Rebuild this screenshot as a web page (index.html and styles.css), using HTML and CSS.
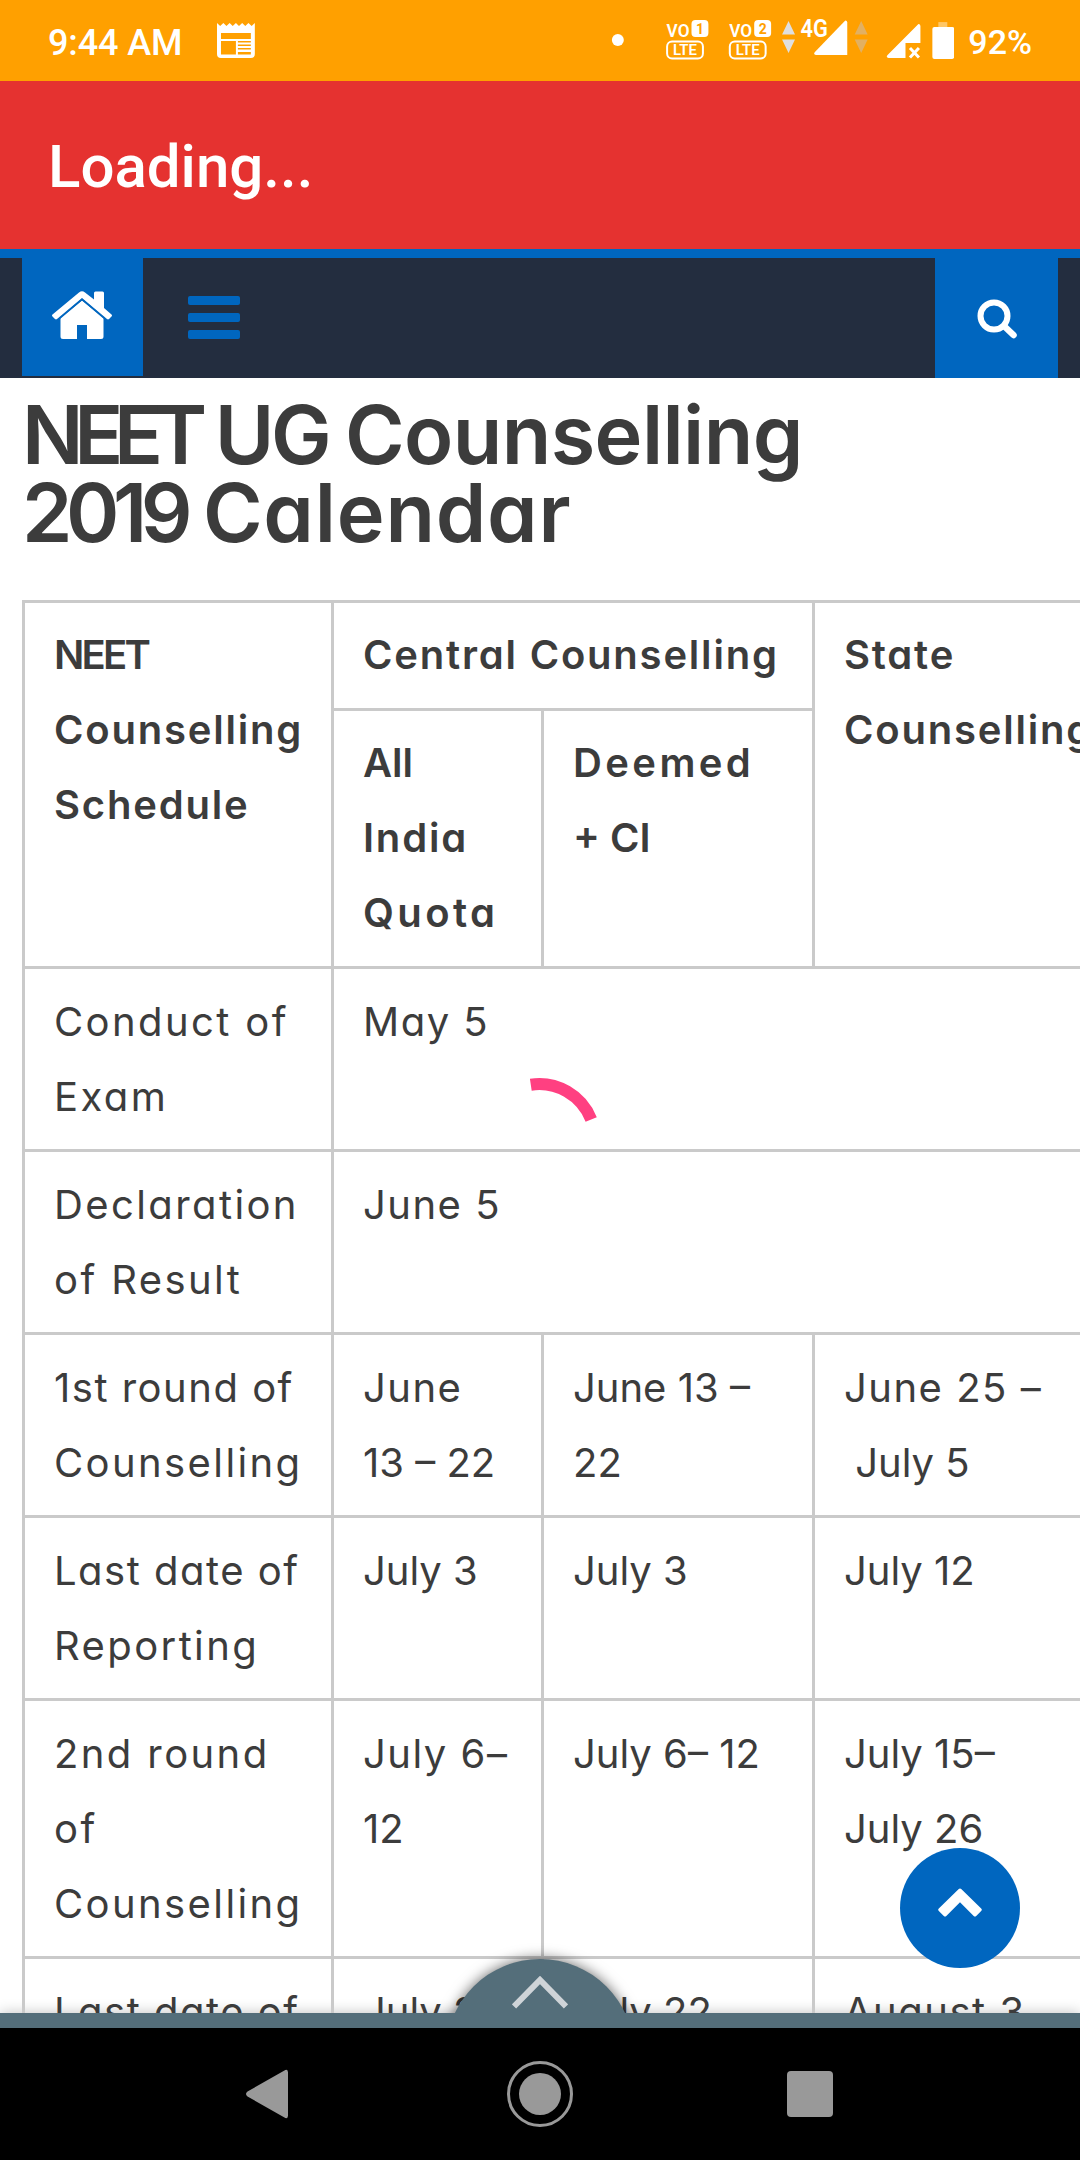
FILE: index.html
```
<!DOCTYPE html>
<html lang="en">
<head>
  <meta charset="utf-8">
  <title>NEET UG Counselling 2019 Calendar</title>
  <link rel="stylesheet" href="styles.css">
</head>
<body>

  <div class="status-bar">
    <span class="time">9:44 AM</span>
    <svg class="news-icon" width="38" height="35" viewBox="0 0 38 35">
      <path fill="#fff" fill-rule="evenodd" d="M0 0l3.2 3L6.400 0l3.100 3L12.700 0l3.100 3L19 0l3.100 3 3.200-3 3.100 3 3.200-3 3.200 3L38 0v31q0 4-4 4H4q-4 0-4-4zM4 10v6h30v-6zM4 18v13.500h15V18zM21 18v1.500h13V18zM21 21.500V23h13v-1.500zM21 25v1.500h13V25zM21 29v2.500h13V29z"/>
    </svg>
    <svg class="signal-icons" width="376" height="81" viewBox="580 0 376 81">
      <circle cx="618" cy="40" r="6" fill="#fff"/>
      <g fill="none" stroke="#fff" stroke-width="2">
        <rect x="667.500" y="41.500" width="36" height="17" rx="5"/>
        <rect x="730.500" y="41.500" width="36" height="17" rx="5"/>
      </g>
      <g fill="#fff">
        <rect x="692" y="20" width="17" height="17" rx="4"/>
        <rect x="755" y="20" width="17" height="17" rx="4"/>
      </g>
      <g class="lte">
        <text x="667" y="37" textLength="23" lengthAdjust="spacingAndGlyphs">VO</text>
        <text x="730" y="37" textLength="23" lengthAdjust="spacingAndGlyphs">VO</text>
        <text class="small" x="673.500" y="55.500" textLength="24">LTE</text>
        <text class="small" x="736.500" y="55.500" textLength="24">LTE</text>
        <text class="sim" x="700.500" y="33.500">1</text>
        <text class="sim" x="763.500" y="33.500">2</text>
      </g>
      <path fill="#dfdfdf" d="M789.500 21l6.500 13.500h-13zM783 39.500h13L789.500 53z"/>
      <path fill="#e2b062" d="M862.500 21l6.500 13.500h-13zM856 39.500h13L862.500 53z"/>
      <text class="net" x="801.500" y="37" textLength="27.500" lengthAdjust="spacingAndGlyphs">4G</text>
      <path fill="#fff" d="M846.500 20.500q2 0 2 2V55h-31.500q-3-.5-1-3z"/>
      <path fill="#fff" d="M920 24q2 0 2 2v17h-15v15h-17q-3-.5-1-3z"/>
      <path stroke="#fff" stroke-width="3" d="M911.500 48l9 9.500M920.500 48l-9 9.500"/>
      <path fill="#ffc766" d="M940 22h9v6h-9z"/>
      <rect x="934" y="27" width="22" height="32" rx="2" fill="#fff"/>
    </svg>
    <span class="battery">92%</span>
  </div>

  <div class="app-bar">Loading...</div>

  <nav class="site-nav">
    <a class="home" href="#">
      <svg width="60" height="49" viewBox="0 0 60 49">
        <path fill="#fff" d="M30 9.500l21.500 17.500v18.500q0 2.500-2.500 2.500H35V34H25v14H11q-2.500 0-2.500-2.500V27z"/>
        <path fill="#fff" d="M27 1.500Q30-1 33 1.500l9 7V2q0-1.500 1.500-1.500h7Q52 .5 52 2v15l7.500 6.500q1 1 0 2L57 28q-1 .8-2 0L30 7 5 28q-1 .8-2 0L.5 25.500q-1-1 0-2z"/>
        <path fill="none" stroke="#0066bf" stroke-width="1.500" d="M7 28L30 8.500 53 28"/>
      </svg>
    </a>
    <div class="menu-toggle"><i></i><i></i><i></i></div>
    <a class="search" href="#">
      <svg width="40" height="40" viewBox="0 0 40 40">
        <circle cx="17" cy="17" r="13.500" fill="none" stroke="#fff" stroke-width="6"/>
        <path stroke="#fff" stroke-width="6.500" stroke-linecap="round" d="M27 27l9.500 9"/>
      </svg>
    </a>
  </nav>

  <main class="content">
    <h1><span class="caps">NEET</span> UG <span class="word">Counselling</span><br><span class="year">2019</span> <span class="word wide">Calendar</span></h1>

    <table class="schedule">
      <colgroup>
        <col class="c1"><col class="c2"><col class="c3"><col class="c4">
      </colgroup>
      <tr>
        <th rowspan="2"><span class="neet">NEET</span><br>Counselling<br>Schedule</th>
        <th colspan="2">Central Counselling</th>
        <th rowspan="2">State<br>Counselling</th>
      </tr>
      <tr>
        <th><span class="plain">All</span><br>India<br><span class="loose">Quota</span></th>
        <th><span class="loose">Deemed</span><br><span class="plain">+ CI</span></th>
      </tr>
      <tr>
        <td class="name">Conduct of<br>Exam</td>
        <td colspan="3"><span class="mid">May 5</span></td>
      </tr>
      <tr>
        <td class="name">Declaration<br>of Result</td>
        <td colspan="3"><span class="mid">June 5</span></td>
      </tr>
      <tr>
        <td class="name"><span class="mid">1st round of</span><br>Counselling</td>
        <td><span class="mid">June</span><br>13 – 22</td>
        <td>June 13 –<br>22</td>
        <td><span class="mid">June 25 –</span><br>&nbsp;July 5</td>
      </tr>
      <tr>
        <td class="name"><span class="mid">Last date of</span><br>Reporting</td>
        <td>July 3</td>
        <td>July 3</td>
        <td>July 12</td>
      </tr>
      <tr>
        <td class="name">2nd round<br>of<br>Counselling</td>
        <td><span class="mid">July 6–</span><br>12</td>
        <td>July 6– 12</td>
        <td>July 15–<br>July 26</td>
      </tr>
      <tr>
        <td class="name"><span class="mid">Last date of</span><br>Reporting</td>
        <td>July 22</td>
        <td>July 22</td>
        <td><span class="mid">August 3</span></td>
      </tr>
    </table>

    <!-- page loading spinner -->
    <svg class="spinner" width="124" height="124" viewBox="0 0 124 124">
      <path fill="none" stroke="#ff4081" stroke-width="12" d="M52.800 6.700A56 56 0 0 1 113.200 41.500"/>
    </svg>

    <a class="to-top" href="#">
      <svg width="44" height="29" viewBox="0 0 44 29">
        <path fill="#fff" d="M20.500 1.200q1.500-1.500 3 0L43.200 20.500q1.300 1.300 0 2.500l-5 5q-1.300 1.200-2.500 0L22 14.300 8.300 28q-1.200 1.200-2.500 0l-5-5q-1.300-1.200 0-2.500z"/>
      </svg>
    </a>

    <div class="pull-tab">
      <svg width="56" height="34" viewBox="0 0 56 34">
        <path fill="none" stroke="#cfd4d8" stroke-width="6" d="M2 30.500L28 4l26 26.500"/>
      </svg>
    </div>
  </main>

  <div class="bottom-strip"></div>

  <div class="android-nav">
    <svg width="50" height="50" viewBox="0 0 50 50">
      <path fill="#999" d="M41 1.800q4-2.500 4 1.700v43q0 4.200-4 1.700L4.500 27.500q-3-2.500 0-5z"/>
    </svg>
    <svg width="66" height="66" viewBox="0 0 66 66">
      <circle cx="33" cy="33" r="31.500" fill="none" stroke="#999" stroke-width="3"/>
      <circle cx="33" cy="33" r="21" fill="#999"/>
    </svg>
    <svg width="46" height="46" viewBox="0 0 46 46">
      <rect width="46" height="46" rx="4" fill="#999"/>
    </svg>
  </div>

</body>
</html>
```
FILE: styles.css
```
* {
  box-sizing: border-box;
}

body {
  margin: 0;
  width: 1080px;
  height: 2160px;
  display: flex;
  flex-direction: column;
  overflow: hidden;
  background-color: #fff;
  color: #3c3c3c;
  font-family: Inter, "Open Sans", sans-serif;
}

/* Phone status bar */
.status-bar {
  height: 81px;
  flex: none;
  display: flex;
  align-items: center;
  background-color: #ffa000;
  color: #fff;
  font-family: Roboto, sans-serif;
  font-weight: 500;
  padding: 0 48px;
}

.time {
  width: 170px;
  font-size: 36px;
  letter-spacing: -0.1px;
  padding-top: 4px;
}

.signal-icons {
  margin-left: 325px;
}

.lte text,
.net {
  fill: #fff;
  font-size: 18px;
  font-weight: 600;
}

.lte .small {
  font-size: 15px;
}

.lte .sim {
  fill: #ffa000;
  font-size: 14px;
  font-weight: 700;
  text-anchor: middle;
}

.net {
  font-size: 25px;
}

.battery {
  margin-left: 14px;
  font-size: 34px;
  padding-top: 2px;
}

.app-bar {
  height: 168px;
  flex: none;
  padding: 0 48px;
  background-color: #e53230;
  color: #fff;
  font-family: Roboto, sans-serif;
  font-size: 60px;
  font-weight: 500;
  line-height: 172px;
}

/* Site navigation */
.site-nav {
  height: 129px;
  flex: none;
  display: flex;
  border-top: 9px solid #0066bf;
  background-color: #232d3f;
  padding: 0 22px;
}

.home {
  width: 121px;
  height: 118px;
  display: flex;
  justify-content: center;
  background-color: #0066bf;
  padding: 33px 1px 0 0;
}

.menu-toggle {
  margin: 38px 0 0 45px;
  display: flex;
  flex-direction: column;
  gap: 8px;
}

.menu-toggle i {
  width: 52px;
  height: 9px;
  border-radius: 2px;
  background-color: #0066bf;
}

.search {
  width: 123px;
  margin-left: auto;
  display: flex;
  justify-content: center;
  background-color: #0066bf;
  padding-top: 41px;
}

/* Page */
.content {
  position: relative;
  flex: 1;
  overflow: hidden;
  padding: 18px 0 0 22px;
}

h1 {
  margin: 0 0 48px;
  font-size: 81px;
  line-height: 78px;
  font-weight: 600;
  letter-spacing: -3.5px;
  font-feature-settings: "cv11";
}

h1 .caps {
  letter-spacing: -9.3px;
}

h1 .word {
  letter-spacing: -0.6px;
}

h1 .wide {
  letter-spacing: 0.8px;
}

h1 .year {
  letter-spacing: -6.5px;
}

.schedule {
  width: 1100px;
  table-layout: fixed;
  border-collapse: collapse;
  font-size: 40px;
  line-height: 75px;
  font-feature-settings: "cv11";
}

.schedule th,
.schedule td {
  border: 3px solid #cacaca;
  padding: 15px 0 15px 29px;
  text-align: left;
  vertical-align: top;
  white-space: nowrap;
}

.schedule th {
  font-weight: 600;
  letter-spacing: 1.8px;
  padding-top: 14px;
  padding-bottom: 16px;
}

.schedule .name {
  letter-spacing: 2.4px;
}

.schedule .mid {
  letter-spacing: 1.5px;
}

.schedule .neet {
  letter-spacing: -2.8px;
}

.schedule .plain {
  letter-spacing: 0;
}

.schedule .loose {
  letter-spacing: 3.4px;
}

.c1 {
  width: 309px;
}

.c2 {
  width: 210px;
}

.c3 {
  width: 271px;
}

/* Things floating over the page */
.spinner {
  position: absolute;
  left: 478px;
  top: 700px;
}

.to-top {
  position: absolute;
  right: 60px;
  bottom: 45px;
  width: 120px;
  height: 120px;
  border-radius: 50%;
  background-color: #0066bf;
  display: flex;
  justify-content: center;
  padding-top: 40px;
}

.pull-tab {
  position: absolute;
  left: 446px;
  top: 1581px;
  width: 188px;
  height: 188px;
  border-radius: 50%;
  background-color: #546e7a;
  box-shadow: 0 0 14px rgba(0, 0, 0, 0.6);
  display: flex;
  justify-content: center;
  padding-top: 17px;
}

.bottom-strip {
  height: 15px;
  flex: none;
  background-color: #546e7a;
  box-shadow: 0 0 14px rgba(0, 0, 0, 0.25);
}

.android-nav {
  height: 132px;
  flex: none;
  display: flex;
  justify-content: space-between;
  align-items: center;
  padding: 0 247px 0 243px;
  background-color: #000;
}
```
